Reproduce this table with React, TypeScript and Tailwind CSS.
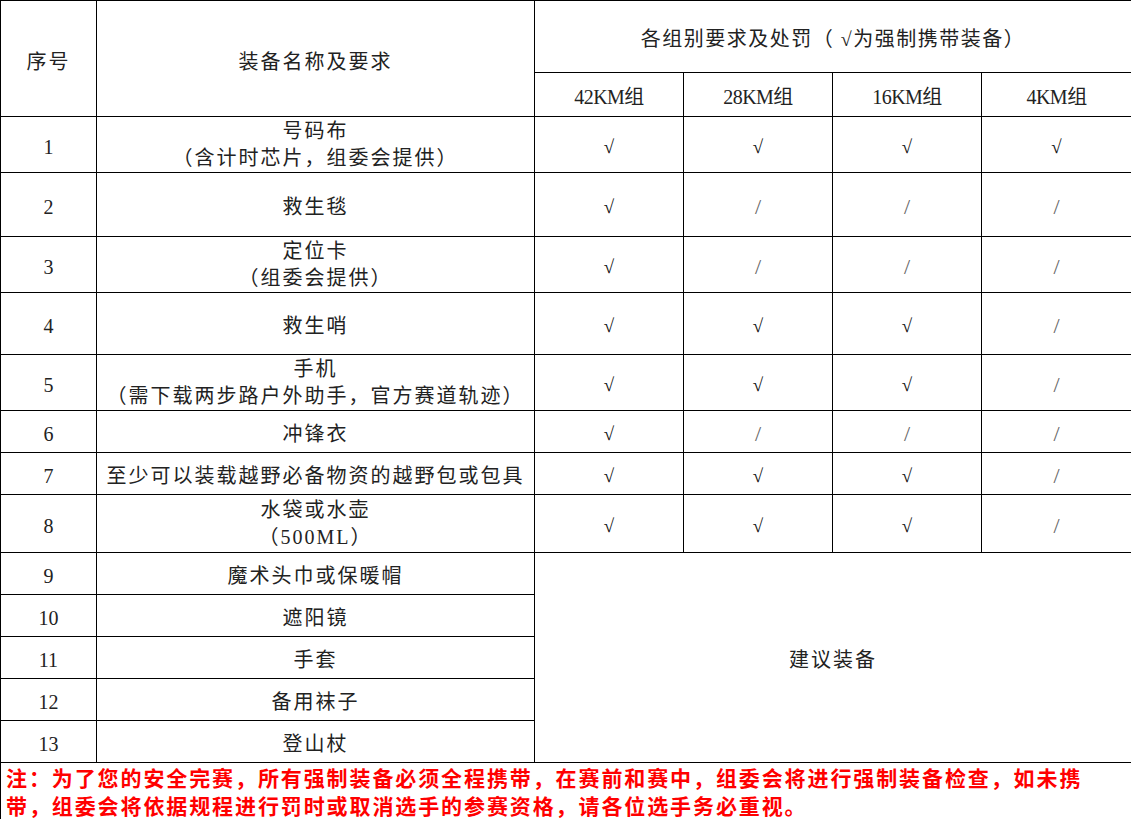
import React from "react";

const CJK = "font-['Liberation_Serif','Noto_Sans_CJK_SC',serif]";

type Mark = "y" | "n";
type Row = { no: string; name: React.ReactNode; two?: boolean; h: string; marks: Mark[] };

const Check = () => (
  <span className="font-['Liberation_Serif',serif] text-[19px] text-[#111]">√</span>
);
const Slash = () => (
  <span className="font-['Liberation_Serif',serif] text-[22px] text-[#666]">/</span>
);

const rows: Row[] = [
  {
    no: "1",
    two: true,
    name: (
      <>
        <div>号码布</div>
        <div>（含计时芯片，组委会提供）</div>
      </>
    ),
    h: "h-[56px]",
    marks: ["y", "y", "y", "y"],
  },
  { no: "2", name: "救生毯", h: "h-[64px]", marks: ["y", "n", "n", "n"] },
  {
    no: "3",
    two: true,
    name: (
      <>
        <div>定位卡</div>
        <div>（组委会提供）</div>
      </>
    ),
    h: "h-[56px]",
    marks: ["y", "n", "n", "n"],
  },
  { no: "4", name: "救生哨", h: "h-[62px]", marks: ["y", "y", "y", "n"] },
  {
    no: "5",
    two: true,
    name: (
      <>
        <div>手机</div>
        <div>（需下载两步路户外助手，官方赛道轨迹）</div>
      </>
    ),
    h: "h-[56px]",
    marks: ["y", "y", "y", "n"],
  },
  { no: "6", name: "冲锋衣", h: "h-[42px]", marks: ["y", "n", "n", "n"] },
  {
    no: "7",
    name: "至少可以装载越野必备物资的越野包或包具",
    h: "h-[42px]",
    marks: ["y", "y", "y", "n"],
  },
  {
    no: "8",
    two: true,
    name: (
      <>
        <div>水袋或水壶</div>
        <div>（500ML）</div>
      </>
    ),
    h: "h-[58px]",
    marks: ["y", "y", "y", "n"],
  },
];

const extra = ["魔术头巾或保暖帽", "遮阳镜", "手套", "备用袜子", "登山杖"];

const td = "border border-black text-center align-middle px-0";
const one = `${td} pt-[4px] pb-0`;
const twoCell = `${td} pt-[1px] pb-0`;

export default function App() {
  return (
    <div className="w-[1131px] bg-white">
      <table
        className={`w-[1131px] table-fixed border-collapse text-[20px] leading-[26px] text-[#222] ${CJK}`}
      >
        <colgroup>
          <col className="w-[96px]" />
          <col className="w-[438px]" />
          <col className="w-[149px]" />
          <col className="w-[149px]" />
          <col className="w-[149px]" />
          <col className="w-[150px]" />
        </colgroup>
        <tbody>
          <tr className="h-[72px]">
            <td rowSpan={2} className={`${td} pt-[6px] pb-0 tracking-[2px]`}>
              序号
            </td>
            <td rowSpan={2} className={`${td} pt-[6px] pb-0 tracking-[2px]`}>
              装备名称及要求
            </td>
            <td colSpan={4} className={`${one} tracking-[1.5px]`}>
              各组别要求及处罚（ √为强制携带装备）
            </td>
          </tr>
          <tr className="h-[44px]">
            {["42KM组", "28KM组", "16KM组", "4KM组"].map((g) => (
              <td key={g} className={`${one} tracking-[-0.5px]`}>
                {g}
              </td>
            ))}
          </tr>
          {rows.map((r) => (
            <tr key={r.no} className={r.h}>
              <td className={one}>{r.no}</td>
              <td className={`${r.two ? twoCell : one} tracking-[2px] [&>div]:leading-[27px]`}>
                {r.name}
              </td>
              {r.marks.map((m, i) => (
                <td key={i} className={one}>
                  {m === "y" ? <Check /> : <Slash />}
                </td>
              ))}
            </tr>
          ))}
          {extra.map((name, i) => (
            <tr key={name} className="h-[42px]">
              <td className={one}>{9 + i}</td>
              <td className={`${one} tracking-[2px]`}>{name}</td>
              {i === 0 && (
                <td colSpan={4} rowSpan={5} className={`${one} tracking-[2px]`}>
                  建议装备
                </td>
              )}
            </tr>
          ))}
          <tr className="h-[56px]">
            <td
              colSpan={6}
              className="border border-black px-[5px] py-0 text-left align-middle font-['Noto_Sans_CJK_SC',sans-serif] text-[21px] font-bold leading-[28px] tracking-[1.9px] text-[#ff0000]"
            >
              <div className="whitespace-nowrap">
                注：为了您的安全完赛，所有强制装备必须全程携带，在赛前和赛中，组委会将进行强制装备检查，如未携
              </div>
              <div className="whitespace-nowrap">
                带，组委会将依据规程进行罚时或取消选手的参赛资格，请各位选手务必重视。
              </div>
            </td>
          </tr>
        </tbody>
      </table>
    </div>
  );
}
